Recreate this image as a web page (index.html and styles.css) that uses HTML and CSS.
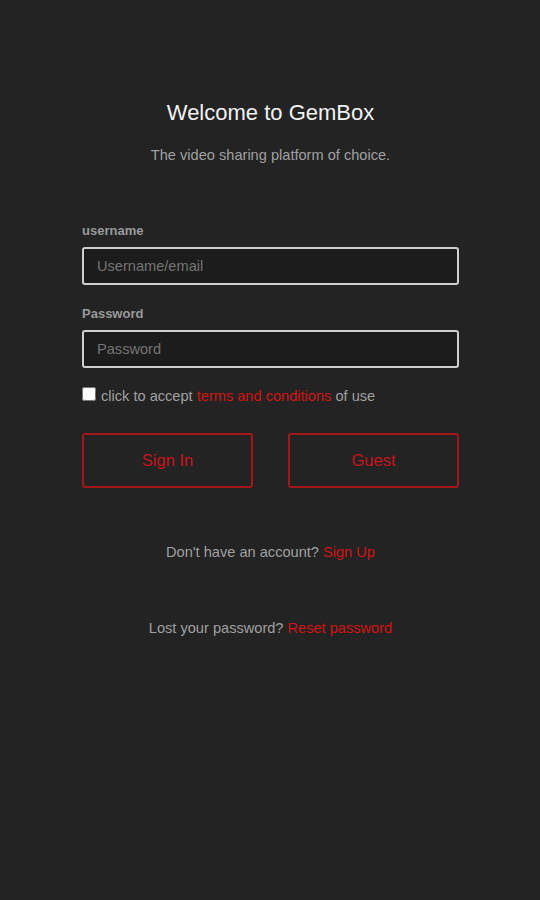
FILE: index.html
```html
<!DOCTYPE html>
<html>
<head>
<meta charset="utf-8">
<link rel="stylesheet" href="styles.css">
</head>
<body>
<main class="page">
  <header class="intro">
    <h1 class="title">Welcome to GemBox</h1>
    <p class="subtitle">The video sharing platform of choice.</p>
  </header>
  <form class="form">
    <label class="label" for="u">username</label>
    <input class="field" id="u" type="text" placeholder="Username/email">
    <label class="label" for="p">Password</label>
    <input class="field" id="p" type="password" placeholder="Password">
    <div class="terms">
      <input class="check" type="checkbox">
      <span>click to accept <a class="link" href="#">terms and conditions</a> of use</span>
    </div>
    <div class="buttons">
      <button class="btn" type="button">Sign In</button>
      <button class="btn" type="button">Guest</button>
    </div>
  </form>
  <p class="note signup">Don't have an account? <a class="link" href="#">Sign Up</a></p>
  <p class="note reset">Lost your password? <a class="link" href="#">Reset password</a></p>
</main>
</body>
</html>
```
FILE: styles.css
```css
html, body {
  margin: 0;
  padding: 0;
  background: #232323;
  font-family: "Liberation Sans", Arial, sans-serif;
}
.page {
  width: 377px;
  margin: 0 0 0 82px;
  padding-top: 99px;
  display: flex;
  flex-direction: column;
}
.intro {
  text-align: center;
}
.title {
  margin: 0;
  font-size: 22px;
  font-weight: normal;
  color: #f2f2f2;
  line-height: 28px;
}
.subtitle {
  margin: 20px 0 0;
  font-size: 14.6px;
  color: #a0a0a0;
  line-height: 16px;
}
.form {
  margin-top: 60px;
  display: flex;
  flex-direction: column;
}
.label {
  font-size: 13px;
  font-weight: bold;
  color: #9a9a9a;
  line-height: 15px;
  margin-bottom: 9px;
}
.field {
  box-sizing: border-box;
  height: 38px;
  width: 100%;
  margin: 0 0 21px;
  padding: 0 13px;
  background: #1c1c1c;
  border: 2px solid #cfcfcf;
  border-radius: 3px;
  font-family: inherit;
  font-size: 14.6px;
  color: #ddd;
  outline: none;
}
.field::placeholder {
  color: #747474;
}
.terms {
  margin-top: -1px;
  display: flex;
  align-items: center;
  font-size: 14.6px;
  color: #a0a0a0;
  line-height: 16px;
}
.check {
  margin: 0 5px 0 0;
  width: 14px;
  height: 14px;
  position: relative;
  top: -2px;
}
.link {
  color: #d21414;
  text-decoration: none;
}
.buttons {
  margin-top: 29px;
  display: flex;
  justify-content: space-between;
}
.btn {
  box-sizing: border-box;
  width: 171px;
  height: 55px;
  background: transparent;
  border: 2px solid #a3161a;
  border-radius: 3px;
  color: #c8141c;
  font-family: inherit;
  font-size: 16.5px;
}
.note {
  margin: 0;
  text-align: center;
  font-size: 14.6px;
  color: #a0a0a0;
  line-height: 16px;
}
.signup {
  margin-top: 56px;
}
.reset {
  margin-top: 60px;
}
```
